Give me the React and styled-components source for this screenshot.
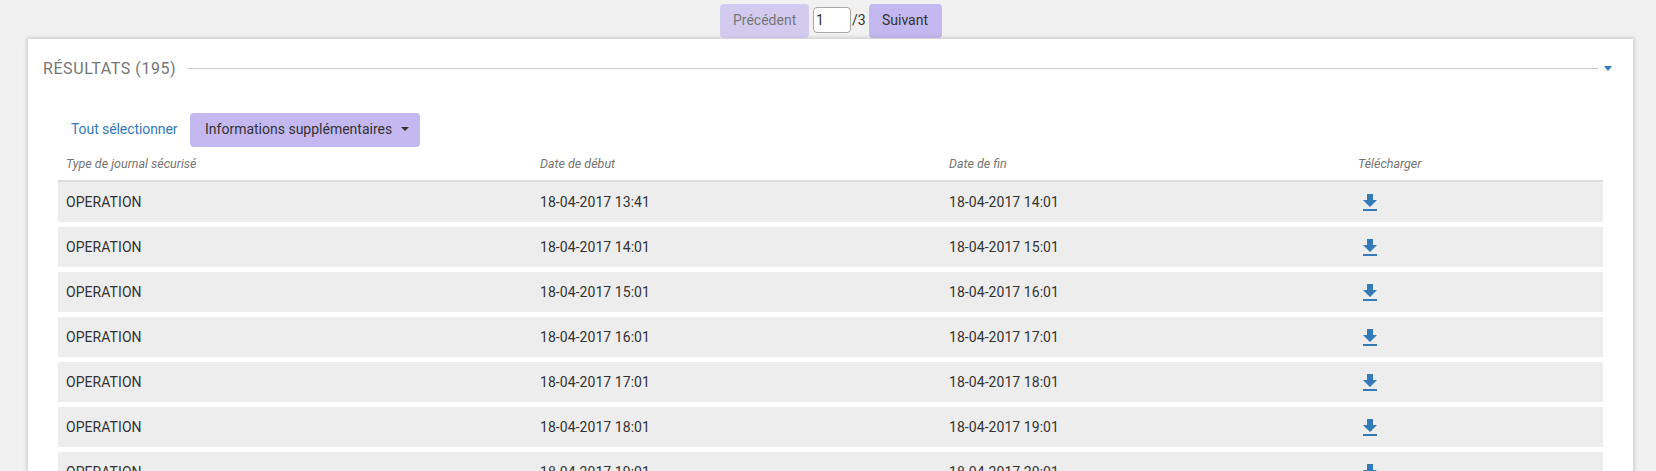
import React from "react";
import styled, { createGlobalStyle } from "styled-components";

const GlobalStyle = createGlobalStyle`
  *, *::before, *::after { box-sizing: border-box; }
  html { overflow: hidden; }
  body {
    margin: 0;
    background: #f1f1f1;
    color: #333;
    font: 400 14px/20px Roboto, "Liberation Sans", sans-serif;
  }
`;

const Page = styled.div`
  display: flex;
  flex-direction: column;
  height: 471px;
  padding: 4px 23px 0 28px;
  overflow: hidden;
`;

const Pager = styled.nav`
  display: flex;
  flex: none;
  align-items: center;
  height: 34px;
  margin: 0 0 1px 692px;
`;

const Button = styled.button`
  display: flex;
  flex: none;
  align-items: center;
  height: 34px;
  width: ${(p) => p.$width}px;
  padding: 0 0 2px ${(p) => p.$inset || 13}px;
  border: 0;
  border-radius: 4px;
  background: #c3b8ef;
  color: #333;
  font: inherit;
  white-space: nowrap;
  opacity: ${(p) => (p.disabled ? 0.65 : 1)};
`;

const PageInput = styled.input`
  width: 38px;
  height: 26px;
  margin: 0 1px 2px 4px;
  padding: 0 2px;
  border: 1px solid #a9a9a3;
  border-radius: 4px;
  background: #fff;
  color: #333;
  font: inherit;
`;

const PageTotal = styled.span`
  width: 17px;
  padding-bottom: 2px;
`;

const Card = styled.section`
  flex: none;
  width: 1605px;
  height: 480px;
  padding: 17px 21px 0 15px;
  background: #fff;
  box-shadow: 0 0 4px 1px rgba(0, 0, 0, 0.18);
`;

const CardHeader = styled.header`
  display: flex;
  align-items: center;
  height: 25px;
`;

const Title = styled.h2`
  width: 144px;
  margin: 0;
  color: #757575;
  font-size: 16px;
  font-weight: 400;
  letter-spacing: 0.58px;
  white-space: nowrap;
`;

const Rule = styled.div`
  flex: 1;
  height: 1px;
  margin-right: 6px;
  background: #c8c8c8;
`;

const Caret = styled.span`
  border: 4px solid transparent;
  border-top: ${(p) => p.$drop || 4}px solid ${(p) => p.$color || "#333"};
  border-bottom: 0;
  margin-left: ${(p) => p.$gap || 0}px;
`;

const Toolbar = styled.div`
  display: flex;
  align-items: center;
  margin: 32px 0 0 28px;
`;

const SelectAll = styled.a`
  width: 119px;
  padding-bottom: 2px;
  color: #337ab7;
  letter-spacing: -0.08px;
  white-space: nowrap;
`;

const Table = styled.div`
  display: flex;
  flex-direction: column;
  width: 1545px;
  margin-left: 15px;
`;

const Row = styled.div`
  display: grid;
  grid-template-columns: 474px 409px 409px 253px;
  align-items: center;
  height: 40px;
  margin-bottom: 5px;
  background: #ededed;
  letter-spacing: 0.06px;
`;

const HeadRow = styled(Row)`
  height: 35px;
  margin-bottom: 0;
  padding-top: 1px;
  border-bottom: 2px solid #dcdcdc;
  background: #fff;
  color: #757575;
  font-size: 12.5px;
  font-style: italic;
  letter-spacing: 0;
`;

const Cell = styled.div`
  display: flex;
  padding-left: 8px;
  white-space: nowrap;
`;

const DownloadIcon = styled.svg`
  display: block;
  width: 14px;
  height: 17px;
  margin: 1px 0 0 5px;
  fill: #337ab7;
`;

const columns = ["Type de journal sécurisé", "Date de début", "Date de fin", "Télécharger"];
const hours = [13, 14, 15, 16, 17, 18, 19];

const stamp = (hour, minute = "01") => `18-04-2017 ${hour}:${minute}`;

export default function App() {
  return (
    <>
      <GlobalStyle />
      <Page>
        <Pager>
          <Button $width={89} disabled>Précédent</Button>
          <PageInput defaultValue="1" aria-label="Page" />
          <PageTotal>/3</PageTotal>
          <Button $width={73}>Suivant</Button>
        </Pager>
        <Card>
          <CardHeader>
            <Title>RÉSULTATS (195)</Title>
            <Rule />
            <Caret $color="#337ab7" $drop={5} />
          </CardHeader>
          <Toolbar>
            <SelectAll>Tout sélectionner</SelectAll>
            <Button $width={230} $inset={15}>
              Informations supplémentaires
              <Caret $gap={9} />
            </Button>
          </Toolbar>
          <Table>
            <HeadRow>
              {columns.map((name) => (
                <Cell key={name}>{name}</Cell>
              ))}
            </HeadRow>
            {hours.map((hour) => (
              <Row key={hour}>
                <Cell>OPERATION</Cell>
                <Cell>{stamp(hour, hour === 13 ? "41" : "01")}</Cell>
                <Cell>{stamp(hour + 1)}</Cell>
                <Cell>
                  <DownloadIcon viewBox="0 0 14 17">
                    <path d="M4 0h6v6h4l-7 7-7-7h4zM0 15h14v2H0z" />
                  </DownloadIcon>
                </Cell>
              </Row>
            ))}
          </Table>
        </Card>
      </Page>
    </>
  );
}
